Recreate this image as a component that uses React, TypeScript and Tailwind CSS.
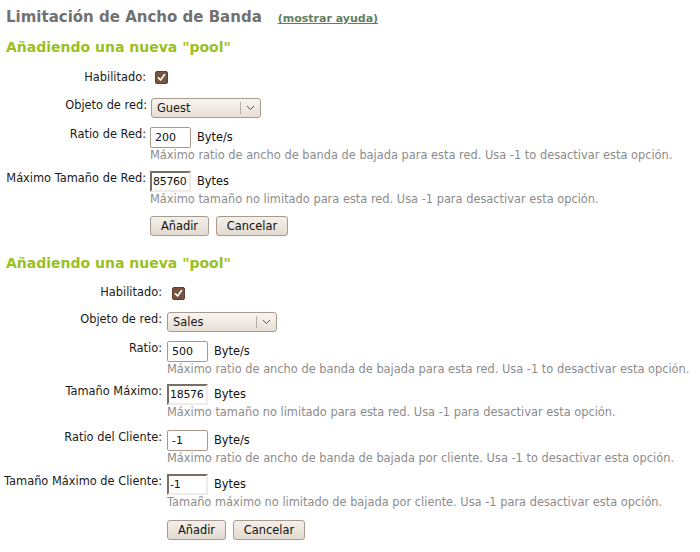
import React from 'react';

const font = { fontFamily: '"DejaVu Sans", sans-serif' };

const Check: React.FC<{ className?: string }> = ({ className }) => (
  <span className={`inline-flex w-[13px] h-[13px] rounded-[2px] bg-[#78543f] border border-[#5e4030] items-center justify-center ${className ?? ''}`}>
    <svg width="9" height="9" viewBox="0 0 9 9">
      <path d="M1.5 4.8 L3.6 7 L7.6 1.6" fill="none" stroke="#fff" strokeWidth="1.7" strokeLinecap="round" strokeLinejoin="round" />
    </svg>
  </span>
);

const Select: React.FC<{ value: string }> = ({ value }) => (
  <div className="flex h-[20px] w-[110px] rounded-[3px] border border-[#a89a8c] bg-gradient-to-b from-[#f7f4f0] to-[#e6dfd6] text-[11.4px] text-[#1a1a1a]">
    <span className="flex-1 pl-[5px] leading-[19px]">{value}</span>
    <span className="w-px my-[3px] bg-[#b8aea3]" />
    <span className="w-[19px] flex items-center justify-center">
      <svg width="9" height="6" viewBox="0 0 9 6">
        <path d="M1 1 L4.5 4.5 L8 1" fill="none" stroke="#555" strokeWidth="1" />
      </svg>
    </span>
  </div>
);

const Input: React.FC<{ value: string; inset?: boolean }> = ({ value, inset }) => (
  <div
    className={`h-[21px] w-[41px] bg-white text-[11px] text-[#111] whitespace-nowrap ${
      inset
        ? 'border-2 border-t-[#7a6f66] border-l-[#7a6f66] border-r-[#f0ebe6] border-b-[#f0ebe6] pl-[1px] leading-[17px] tracking-[-0.3px]'
        : 'border border-[#a8998a] rounded-[2px] pl-[4px] leading-[19px]'
    }`}
  >
    {value}
  </div>
);

const Button: React.FC<{ label: string; w: string }> = ({ label, w }) => (
  <button className={`h-[20px] ${w} rounded-[3px] border border-[#a89a8c] bg-gradient-to-b from-[#f4f0ea] to-[#e2dad0] text-[11.4px] text-[#111] leading-[18px]`}>
    {label}
  </button>
);

type RowProps = { label: string; labelW: string; mt: string; help?: string; children: React.ReactNode };

const Row: React.FC<RowProps> = ({ label, labelW, mt, help, children }) => (
  <div className={`flex ${mt}`}>
    <div className={`${labelW} shrink-0 text-right pl-[4px] text-[11.4px] leading-[14px] text-[#1a1a1a] whitespace-nowrap`}>{label}</div>
    <div className="flex flex-col">
      {children}
      {help && <div className="mt-[1px] text-[11.4px] leading-[13px] text-[#8c8c8c] whitespace-nowrap">{help}</div>}
    </div>
  </div>
);

const Unit: React.FC<{ u: string }> = ({ u }) => <span className="ml-[6px] text-[11.4px] leading-[21px] text-[#111]">{u}</span>;

const Heading: React.FC<{ className?: string }> = ({ className }) => (
  <h2 className={`pl-[6px] text-[14px] font-bold leading-[20px] text-[#9bbf1e] ${className ?? ''}`}>Añadiendo una nueva "pool"</h2>
);

const App: React.FC = () => {
  return (
    <div style={font} className="w-[700px] h-[552px] bg-white overflow-hidden pt-[7px]">
      <div className="flex items-baseline pl-[6px]">
        <h1 className="text-[15px] font-bold leading-[20px] text-[#717171]">Limitación de Ancho de Banda</h1>
        <a href="#" className="ml-[16px] text-[11px] font-bold underline text-[#5f7f62]">(mostrar ayuda)</a>
      </div>

      <Heading className="mt-[9px]" />
      <div className="flex mt-[12px]">
        <div className="w-[146px] text-right pl-[4px] text-[11.4px] leading-[16px] text-[#1a1a1a]">Habilitado:</div>
        <Check className="ml-[9px] mt-[2px]" />
      </div>
      <Row label="Objeto de red:" labelW="w-[151px] pr-[4px]" mt="mt-[13px]">
        <Select value="Guest" />
      </Row>
      <Row label="Ratio de Red:" labelW="w-[150px] pr-[4px]" mt="mt-[9px]" help="Máximo ratio de ancho de banda de bajada para esta red. Usa -1 to desactivar esta opción.">
        <div className="flex"><Input value="200" /><Unit u="Byte/s" /></div>
      </Row>
      <Row label="Máximo Tamaño de Red:" labelW="w-[150px] pr-[4px]" mt="mt-[9px]" help="Máximo tamaño no limitado para esta red. Usa -1 para desactivar esta opción.">
        <div className="flex"><Input value="85760" inset /><Unit u="Bytes" /></div>
      </Row>
      <div className="flex gap-[7px] mt-[10px] pl-[150px]">
        <Button label="Añadir" w="w-[59px]" />
        <Button label="Cancelar" w="w-[72px]" />
      </div>

      <Heading className="mt-[17px]" />
      <div className="flex mt-[11px]">
        <div className="w-[162px] text-right pl-[4px] text-[11.4px] leading-[16px] text-[#1a1a1a]">Habilitado:</div>
        <Check className="ml-[10px] mt-[3px]" />
      </div>
      <Row label="Objeto de red:" labelW="w-[167px] pr-[5px]" mt="mt-[12px]">
        <Select value="Sales" />
      </Row>
      <Row label="Ratio:" labelW="w-[167px] pr-[5px]" mt="mt-[9px]" help="Máximo ratio de ancho de banda de bajada para esta red. Usa -1 to desactivar esta opción.">
        <div className="flex"><Input value="500" /><Unit u="Byte/s" /></div>
      </Row>
      <Row label="Tamaño Máximo:" labelW="w-[167px] pr-[5px]" mt="mt-[8px]" help="Máximo tamaño no limitado para esta red. Usa -1 para desactivar esta opción.">
        <div className="flex"><Input value="18576" inset /><Unit u="Bytes" /></div>
      </Row>
      <Row label="Ratio del Cliente:" labelW="w-[167px] pr-[5px]" mt="mt-[11px]" help="Máximo ratio de ancho de banda de bajada por cliente. Usa -1 to desactivar esta opción.">
        <div className="flex"><Input value="-1" /><Unit u="Byte/s" /></div>
      </Row>
      <Row label="Tamaño Máximo de Cliente:" labelW="w-[167px] pr-[5px]" mt="mt-[9px]" help="Tamaño máximo no limitado de bajada por cliente. Usa -1 para desactivar esta opción.">
        <div className="flex"><Input value="-1" inset /><Unit u="Bytes" /></div>
      </Row>
      <div className="flex gap-[7px] mt-[11px] pl-[167px]">
        <Button label="Añadir" w="w-[59px]" />
        <Button label="Cancelar" w="w-[72px]" />
      </div>
    </div>
  );
};

export default App;
